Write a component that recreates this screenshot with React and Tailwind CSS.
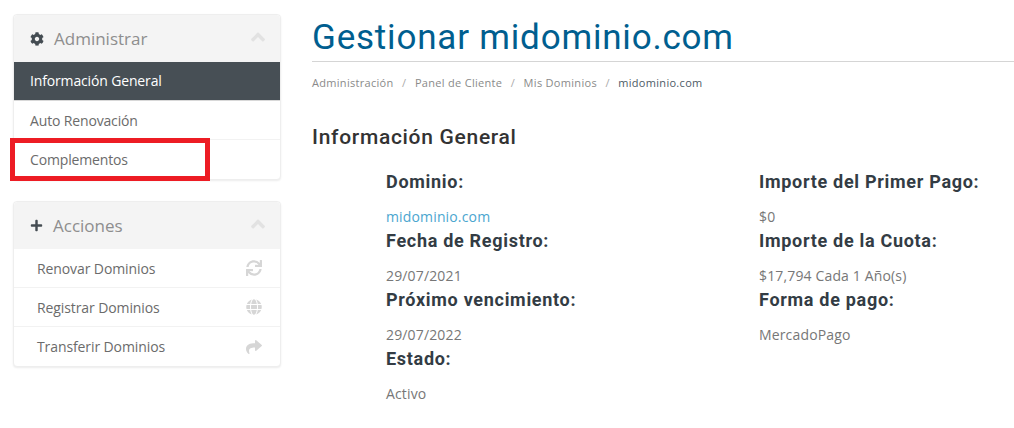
import { FaCog, FaPlus, FaAngleUp, FaSync, FaGlobe, FaShare } from "react-icons/fa"

const manageItems = ["Auto Renovación", "Complementos"]

const actionItems = [
  { label: "Renovar Dominios", Icon: FaSync },
  { label: "Registrar Dominios", Icon: FaGlobe },
  { label: "Transferir Dominios", Icon: FaShare },
]

const leftFields = [
  { label: "Dominio:", value: "midominio.com", link: true },
  { label: "Fecha de Registro:", value: "29/07/2021" },
  { label: "Próximo vencimiento:", value: "29/07/2022" },
  { label: "Estado:", value: "Activo" },
]

const rightFields = [
  { label: "Importe del Primer Pago:", value: "$0" },
  { label: "Importe de la Cuota:", value: "$17,794 Cada 1 Año(s)" },
  { label: "Forma de pago:", value: "MercadoPago" },
]

function PanelHeader({ icon, title }) {
  return (
    <div className="h-[47px] bg-[#f4f4f4] flex items-center pl-[16px] pr-[11px] rounded-t">
      {icon}
      <span className="text-[17px] text-[#8e8e8e] font-['Open_Sans',sans-serif]">{title}</span>
      <FaAngleUp className="ml-auto mb-[4px] text-[#e2e2e2] text-[22px]" />
    </div>
  )
}

function Field({ label, value, link }) {
  return (
    <div>
      <div className="h-[36px] font-['Roboto',sans-serif] font-bold text-[18px] leading-[21px] tracking-[0.7px] text-[#333c44]">
        {label}
      </div>
      <div className={`h-[23px] text-[14px] leading-[20px] tracking-[0.15px] font-['Open_Sans',sans-serif] ${link ? "text-[#4ba6cf]" : "text-[#777]"}`}>
        {value}
      </div>
    </div>
  )
}

export default function App() {
  return (
    <div className="relative w-[1014px] h-[428px] overflow-hidden bg-white flex font-['Open_Sans',sans-serif]">
      {/* Sidebar */}
      <div className="w-[312px] pl-[13px] pt-[14px] shrink-0">
        <div className="w-[268px] rounded border border-[#eeeeee] shadow-[0_1px_2px_rgba(0,0,0,0.08)] bg-white">
          <PanelHeader
            icon={<FaCog className="text-[#444c52] text-[14px] mr-[10px]" />}
            title="Administrar"
          />
          <div className="h-[39px] bg-[#474f55] text-white text-[14px] tracking-[-0.15px] flex items-center pl-[16px] pb-[2px] border-b border-[#d8d8d8]">
            Información General
          </div>
          {manageItems.map((item, i) => (
            <div
              key={item}
              className={`h-[39px] text-[14px] tracking-[-0.15px] text-[#6b6b6b] flex items-center pl-[16px] ${i === 0 ? "border-b border-[#f2f2f2]" : ""}`}
            >
              {item}
            </div>
          ))}
        </div>

        <div className="w-[268px] mt-[21px] rounded border border-[#eeeeee] shadow-[0_1px_2px_rgba(0,0,0,0.08)] bg-white">
          <PanelHeader
            icon={<FaPlus className="text-[#444c52] text-[13px] mr-[10px]" />}
            title="Acciones"
          />
          {actionItems.map(({ label, Icon }, i) => (
            <div
              key={label}
              className={`h-[39px] text-[14px] tracking-[-0.1px] text-[#6b6b6b] flex items-center pl-[23px] pr-[18px] ${i < 2 ? "border-b border-[#f2f2f2]" : ""}`}
            >
              {label}
              <Icon className="ml-auto text-[#d6d6d6] text-[16px]" />
            </div>
          ))}
        </div>
      </div>

      {/* Main */}
      <div className="flex-1 min-w-0">
        <h1 className="mt-[15px] font-['Roboto',sans-serif] text-[35px] leading-[46px] tracking-[0.8px] text-[#005e8f]">
          Gestionar midominio.com
        </h1>
        <div className="border-t border-[#d5d5d5]" />
        <div className="mt-[13px] flex text-[11px] leading-[16px] tracking-[0.3px] text-[#8a8a8a]">
          <span>Administración</span>
          <span className="mx-[8.5px] text-[#aaa]">/</span>
          <span>Panel de Cliente</span>
          <span className="mx-[8.5px] text-[#aaa]">/</span>
          <span>Mis Dominios</span>
          <span className="mx-[8.5px] text-[#aaa]">/</span>
          <span className="text-[#4d5a66]">midominio.com</span>
        </div>
        <h2 className="mt-[34px] font-['Roboto',sans-serif] font-medium text-[21px] leading-[24px] tracking-[0.7px] text-[#333]">
          Información General
        </h2>
        <div className="mt-[22px] ml-[74px] flex">
          <div className="w-[373px] shrink-0">
            {leftFields.map((f) => (
              <Field key={f.label} {...f} />
            ))}
          </div>
          <div>
            {rightFields.map((f) => (
              <Field key={f.label} {...f} />
            ))}
          </div>
        </div>
      </div>

      {/* Red highlight drawn over the screenshot */}
      <div className="absolute left-[10px] top-[138px] w-[200px] h-[43px] border-[5px] border-[#ed1c24]" />
    </div>
  )
}
